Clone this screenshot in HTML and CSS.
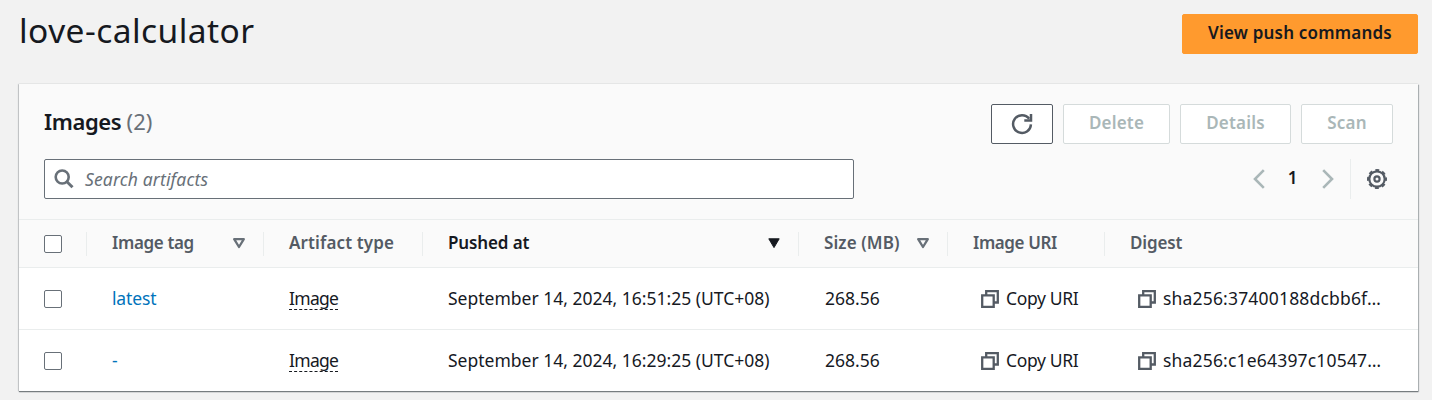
FILE: index.html
```html
<!DOCTYPE html>
<html lang="en">
<head>
<meta charset="utf-8">
<title>love-calculator</title>
<link rel="stylesheet" href="styles.css">
</head>
<body>
<svg class="defs" width="0" height="0">
  <symbol id="copy" viewBox="0 0 18 18"><path d="M5.2 5V1.2h11.6v11.3h-3.6M1.2 5.4h11.5v11.4H1.2z" fill="none" stroke="#545b64" stroke-width="2.3"/></symbol>
  <symbol id="sort" viewBox="0 0 12 11"><path d="M1.2 1.2h9.6L6 9z" fill="none" stroke="#687078" stroke-width="2.3" stroke-linejoin="round"/></symbol>
</svg>
<header class="page-header">
  <h1 class="title">love-calculator</h1>
  <button class="btn primary"><span class="t-push">View push commands</span></button>
</header>
<main class="panel">
  <div class="toolbar">
    <div class="heading-row">
      <h2 class="heading"><span class="t-images">Images</span> <span class="count">(2)</span></h2>
      <div class="actions">
        <button class="btn refresh" aria-label="Refresh"><svg width="22" height="22" viewBox="0 0 22 22" fill="none" stroke="#545b64" stroke-width="2.5"><path d="M19.9 11.4A8.9 8.9 0 1 1 18.2 5.8"/><path d="M20 1v6.5h-6.7"/></svg></button>
        <button class="btn off delete"><span class="t-delete">Delete</span></button>
        <button class="btn off details"><span class="t-details">Details</span></button>
        <button class="btn off scan"><span class="t-scan">Scan</span></button>
      </div>
    </div>
    <div class="filter-row">
      <div class="search"><svg width="20" height="20" viewBox="0 0 20 20" fill="none" stroke="#687078" stroke-width="2.6"><circle cx="8.2" cy="8" r="6.5"/><path d="M12.7 12.5l5.8 5.7" stroke-width="3"/></svg><span class="t-search">Search artifacts</span></div>
      <div class="pager">
        <svg width="12" height="20" viewBox="0 0 12 20" fill="none" stroke="#aab7b8" stroke-width="2.6"><path d="M10.8 1.2L2 10l8.8 8.8"/></svg>
        <span class="page">1</span>
        <svg width="12" height="20" viewBox="0 0 12 20" fill="none" stroke="#aab7b8" stroke-width="2.6"><path d="M1.2 1.2L10 10l-8.8 8.8"/></svg>
        <span class="settings"><svg width="22" height="22" viewBox="-11 -11 22 22" fill="none" stroke="#545b64"><circle r="7.7" stroke-width="2.2"/><circle r="9" stroke-width="2" stroke-dasharray="3.9 3.169" stroke-dashoffset="1.95"/><circle r="2.6" stroke-width="2.2"/></svg></span>
      </div>
    </div>
  </div>
  <div class="row head">
    <div class="cell"><i class="box"></i></div>
    <div class="cell"><span class="t-tag">Image tag</span><svg class="sort" width="12" height="11"><use href="#sort"/></svg></div>
    <div class="cell"><span class="t-type">Artifact type</span></div>
    <div class="cell sorted"><span class="t-pushed">Pushed at</span><svg class="sort" width="12" height="11" viewBox="0 0 12 11"><path d="M.8.8h10.4L6 9.6z" fill="#16191f" stroke="#16191f" stroke-linejoin="round"/></svg></div>
    <div class="cell"><span class="t-size">Size (MB)</span><svg class="sort" width="12" height="11"><use href="#sort"/></svg></div>
    <div class="cell"><span class="t-uri">Image URI</span></div>
    <div class="cell"><span class="t-digest">Digest</span></div>
  </div>
  <div class="row">
    <div class="cell"><i class="box"></i></div>
    <div class="cell"><a class="link">latest</a></div>
    <div class="cell"><span class="type">Image</span></div>
    <div class="cell"><span class="date">September 14, 2024, 16:51:25 (UTC+08)</span></div>
    <div class="cell"><span class="mb">268.56</span></div>
    <div class="cell copy"><svg width="18" height="18"><use href="#copy"/></svg><span class="copy-text">Copy URI</span></div>
    <div class="cell copy"><svg width="18" height="18"><use href="#copy"/></svg><span class="sha">sha256:37400188dcbb6f…</span></div>
  </div>
  <div class="row">
    <div class="cell"><i class="box"></i></div>
    <div class="cell"><a class="link">-</a></div>
    <div class="cell"><span class="type">Image</span></div>
    <div class="cell"><span class="date">September 14, 2024, 16:29:25 (UTC+08)</span></div>
    <div class="cell"><span class="mb">268.56</span></div>
    <div class="cell copy"><svg width="18" height="18"><use href="#copy"/></svg><span class="copy-text">Copy URI</span></div>
    <div class="cell copy"><svg width="18" height="18"><use href="#copy"/></svg><span class="sha">sha256:c1e64397c10547…</span></div>
  </div>
</main>
</body>
</html>
```
FILE: styles.css
```css
* { box-sizing: border-box; }
body { margin: 0; height: 400px; overflow: hidden; background: #f2f2f2; color: #16191f; font: 17.5px/24px "Noto Sans", sans-serif; white-space: nowrap; }
svg { display: block; flex: none; }
.defs { display: none; }
.page-header { display: flex; justify-content: space-between; height: 84px; padding: 14px 14px 0 19px; }
.title { margin: -6px 0 0; font-size: 33.5px; line-height: 44px; font-weight: 400; letter-spacing: .45px; }
.btn { display: flex; align-items: center; justify-content: center; height: 40px; padding: 0 0 2px; border: 1px solid #545b64; border-radius: 2px; background: #fff; font: 600 17px/24px "Noto Sans", sans-serif; letter-spacing: .2px; }
.primary { width: 236px; background: #ff9a2e; border-color: #ff9a2e; color: #16191f; }
.refresh { width: 62px; padding: 0; }
.off { border-color: #d5dbdb; color: #aab7b8; }
.delete { width: 107px; }
.details { width: 111px; }
.scan { width: 92px; }
.panel { width: 1399px; height: 307px; margin-left: 19px; background: #fff; box-shadow: 0 1px 1px #777d80, 1px 1px 1px #b5babb, -1px 0 1px #d0d2d3, 0 0 1px #c0c4c5; }
.toolbar { height: 136px; padding: 20px 25px 0; background: #fafafa; border-bottom: 1px solid #eaeded; }
.heading-row, .filter-row { display: flex; justify-content: space-between; }
.heading-row { height: 55px; }
.heading { margin: 1px 0 0; font-size: 22px; line-height: 32px; font-weight: 600; letter-spacing: -.4px; }
.count { color: #687078; font-weight: 400; letter-spacing: 0; }
.actions { display: flex; gap: 10px; }
.search { display: flex; align-items: center; width: 810px; height: 40px; padding-left: 9px; gap: 11px; border: 1px solid #687078; border-radius: 2px; background: #fff; color: #687078; font-style: italic; letter-spacing: .15px; }
.pager { display: flex; align-items: center; height: 40px; }
.page { width: 57px; padding: 0 2px 2px 0; text-align: center; font-size: 17px; font-weight: 600; }
.settings { display: flex; align-items: center; height: 40px; margin-left: 16px; padding: 0 5px 0 15px; border-left: 1px solid #eaeded; }
.row { display: grid; grid-template-columns: 68px 177px 159px 376px 149px 157px 313px; height: 62px; border-bottom: 1px solid #eaeded; }
.row:last-child { height: 61px; border-bottom: 0; }
.head { height: 48px; background: #fafafa; color: #545b64; font-size: 17px; font-weight: 600; align-items: center; }
.cell { display: flex; align-items: center; padding: 0 18px 0 25px; }
.cell > span, .cell > a { margin-bottom: 2px; }
.head .cell { height: 24px; border-right: 1px solid #eaeded; }
.head .cell:last-child { border-right: 0; }
.sorted { color: #16191f; }
.sort { margin-left: auto; }
.t-tag { letter-spacing: -.35px; }
.t-type { letter-spacing: .12px; }
.t-pushed { letter-spacing: -.12px; }
.t-size { letter-spacing: .1px; }
.t-uri { letter-spacing: -.4px; }
.t-digest { letter-spacing: -.15px; }
.box { width: 18px; height: 18px; border: 1px solid #687078; border-radius: 2px; background: #fff; }
.link { color: #0073bb; letter-spacing: -.15px; }
.cell > .type { height: 22px; margin-bottom: 0; line-height: 20px; border-bottom: 1px dashed #16191f; letter-spacing: -.7px; }
.mb { padding-left: 1px; }
.copy { padding-left: 33px; gap: 7px; }
.copy-text { letter-spacing: -.35px; }
.sha { letter-spacing: .18px; }
```
